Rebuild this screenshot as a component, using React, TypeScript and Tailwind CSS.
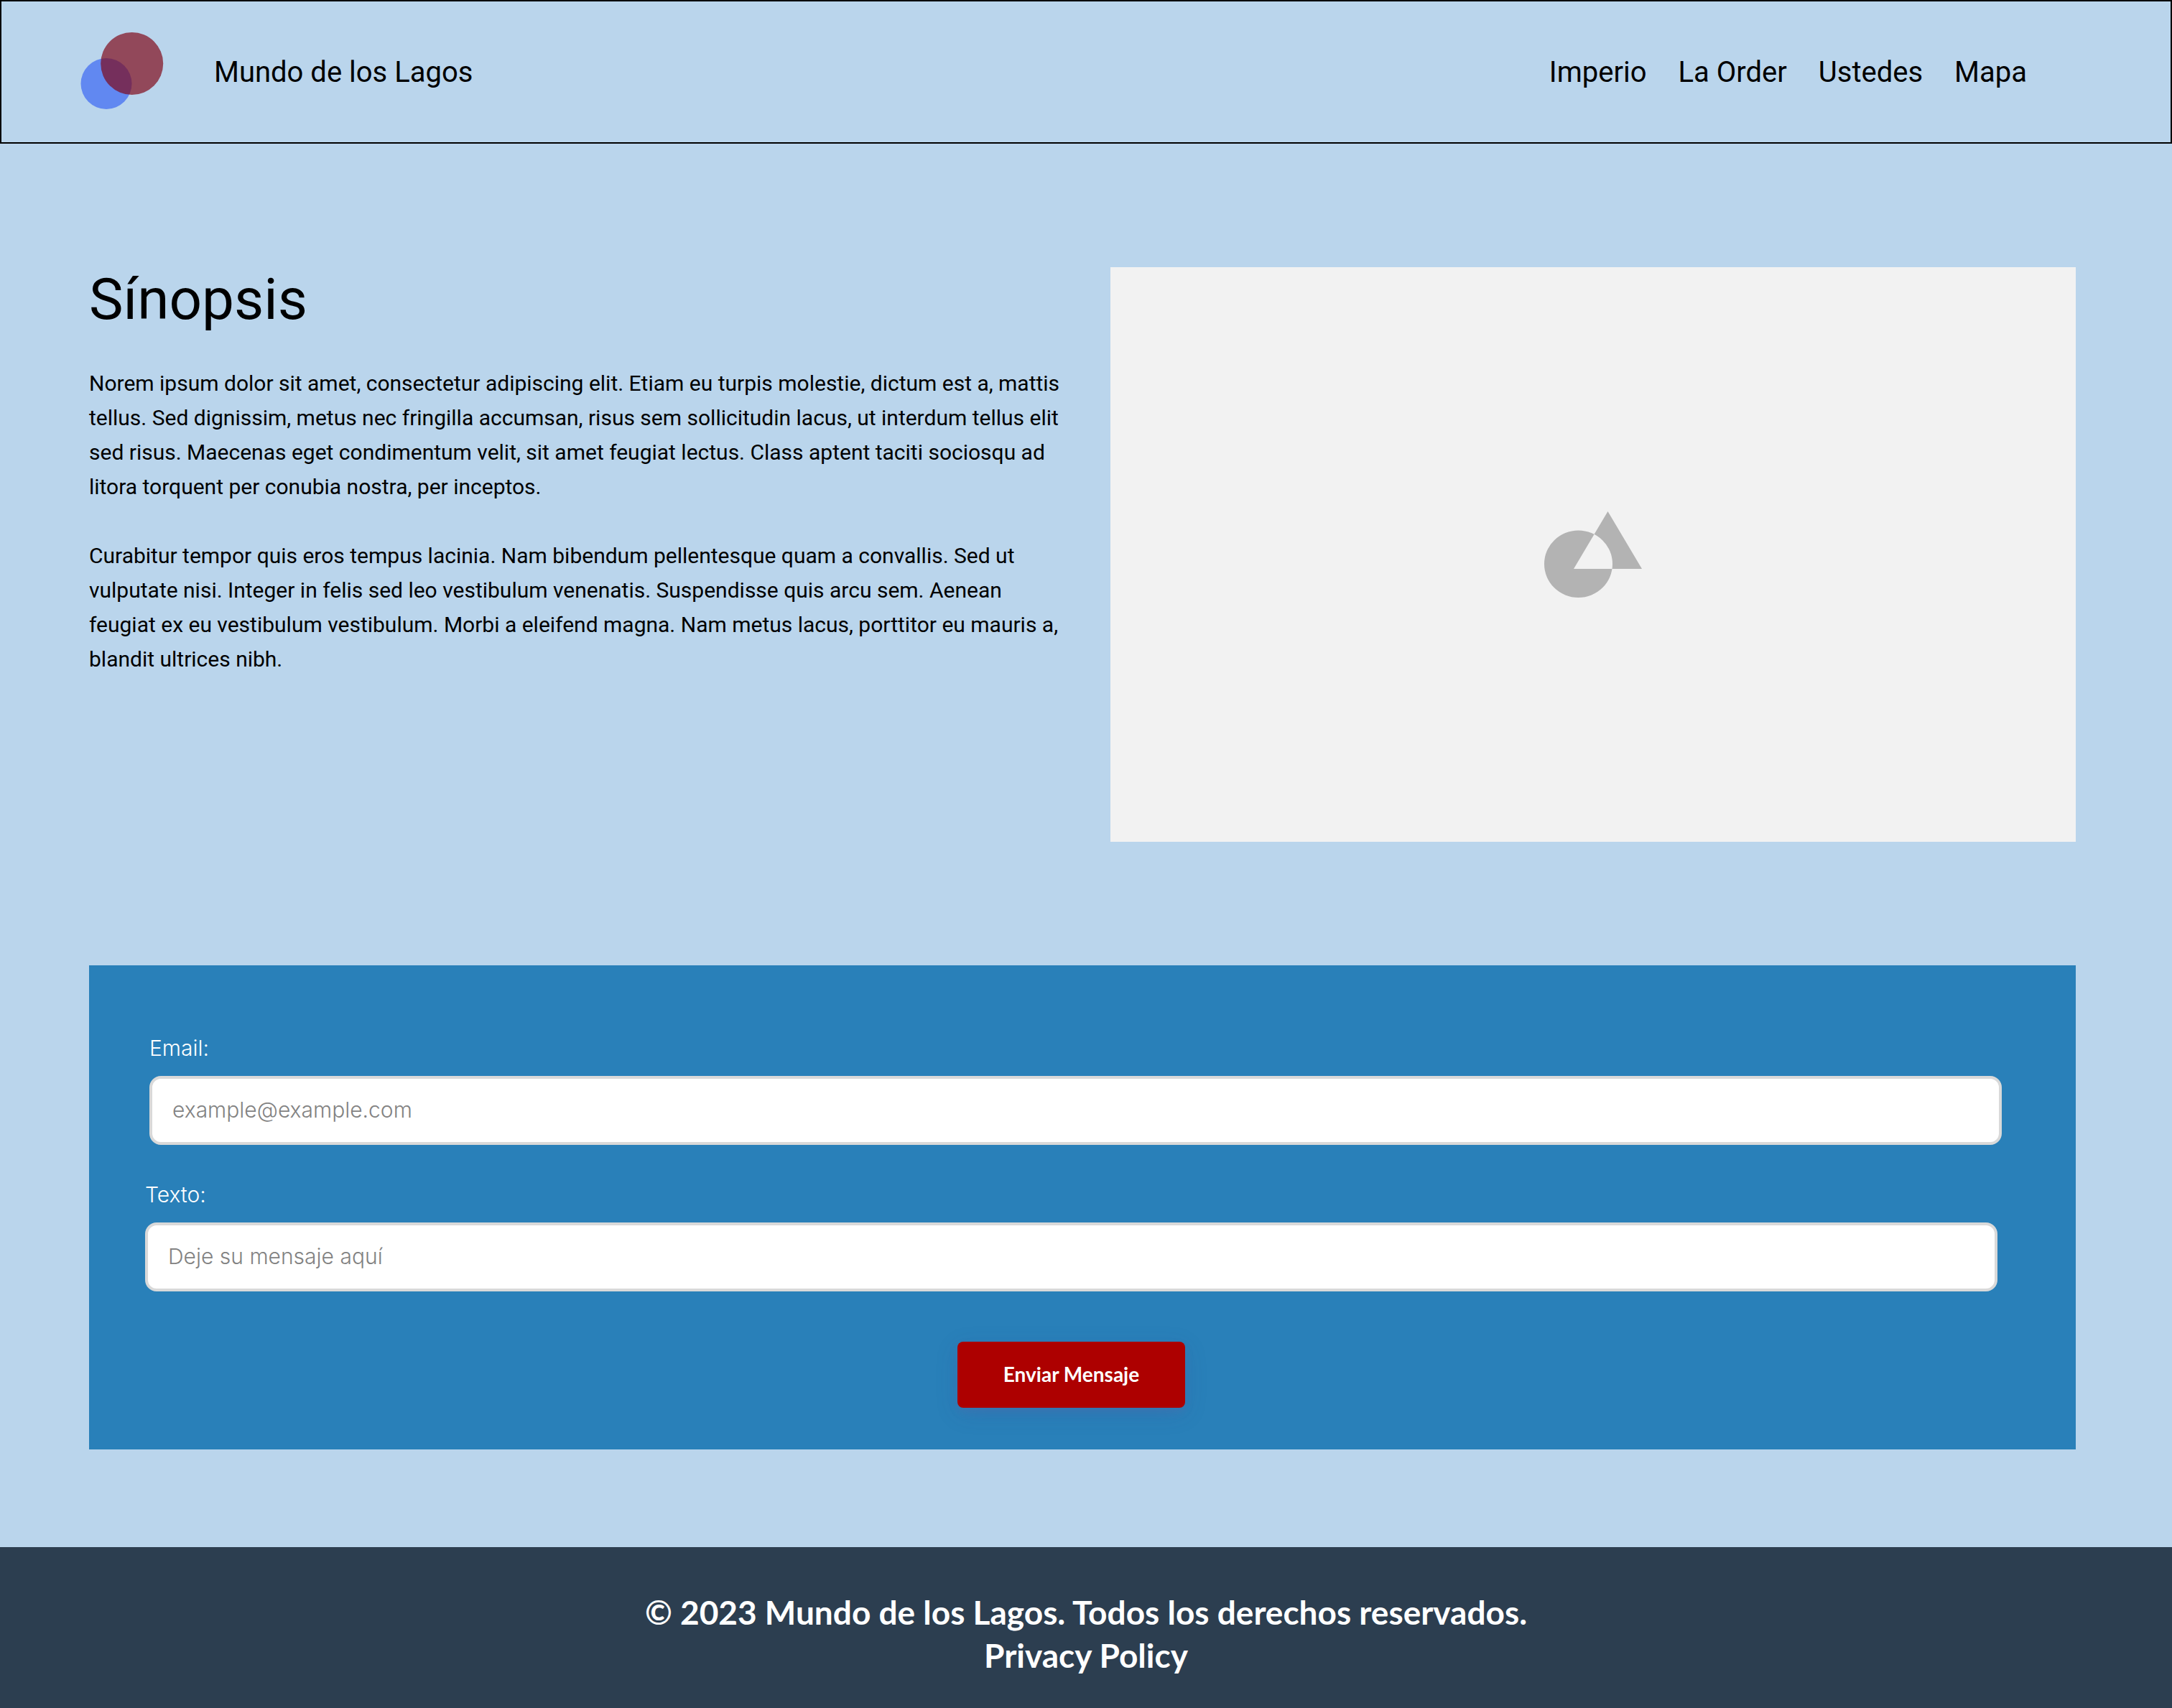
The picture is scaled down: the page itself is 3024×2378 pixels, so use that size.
const links = ['Imperio', 'La Order', 'Ustedes', 'Mapa'];

function Logo() {
  return (
    <svg className="h-[112px] w-[116px]" viewBox="0 0 116 112" role="img" aria-label="Mundo de los Lagos">
      <circle cx="36" cy="71.5" r="35.5" fill="#083BF6" fillOpacity="0.5" />
      <circle cx="71.7" cy="43.5" r="43.5" fill="#7F0414" fillOpacity="0.68" />
    </svg>
  );
}

function Field({ id, label, type, placeholder }: { id: string; label: string; type: string; placeholder: string }) {
  return (
    <div className="flex flex-col gap-4 font-['Inter',sans-serif] text-[30px] font-[350]">
      <label htmlFor={id} className="leading-[46px] text-white">
        {label}
      </label>
      <input
        id={id}
        type={type}
        placeholder={placeholder}
        className="h-24 w-full rounded-[16px] border-4 border-[#d9d9d9] bg-white px-7 pb-0.5 text-[#333333] placeholder:text-[#828282]"
      />
    </div>
  );
}

export default function App() {
  return (
    <div className="flex min-h-screen flex-col bg-[#bad5ec] font-['Roboto',sans-serif] text-black">
      <header className="flex h-[200px] items-center border-2 border-black pt-0.5 pr-[200px] pl-[110px]">
        <Logo />
        <span className="ml-[70px] text-[40px] leading-[48px]">Mundo de los Lagos</span>
        <nav className="ml-auto flex gap-11 text-[40px] leading-[48px]">
          {links.map((link) => (
            <a key={link} href="#">
              {link}
            </a>
          ))}
        </nav>
      </header>

      <main className="flex flex-1 flex-col gap-[172px] pt-[172px] pr-[134px] pb-[136px] pl-[124px]">
        <section className="grid grid-cols-[1362fr_1344fr] gap-[60px]">
          <div>
            <h1 className="text-[80px] leading-[90px]">Sínopsis</h1>
            <div className="mt-12 flex flex-col gap-12 text-[30px] leading-[48px]">
              <p>
                Norem ipsum dolor sit amet, consectetur adipiscing elit. Etiam eu turpis molestie, dictum est a, mattis
                tellus. Sed dignissim, metus nec fringilla accumsan, risus sem sollicitudin lacus, ut interdum tellus
                elit sed risus. Maecenas eget condimentum velit, sit amet feugiat lectus. Class aptent taciti sociosqu
                ad litora torquent per conubia nostra, per inceptos.
              </p>
              <p>
                Curabitur tempor quis eros tempus lacinia. Nam bibendum pellentesque quam a convallis. Sed ut vulputate
                nisi. Integer in felis sed leo vestibulum venenatis. Suspendisse quis arcu sem. Aenean feugiat ex eu
                vestibulum vestibulum. Morbi a eleifend magna. Nam metus lacus, porttitor eu mauris a, blandit ultrices
                nibh.
              </p>
            </div>
          </div>
          <div className="flex aspect-[1344/800] items-center justify-center bg-[#f2f2f2]">
            <svg className="h-[120px] w-[136px]" viewBox="0 0 136 120" fill="#b3b3b3" fillRule="evenodd" aria-hidden="true">
              <path d="M47.5 26.5a47.5 46.75 0 1 0 0 93.5a47.5 46.75 0 1 0 0-93.5ZM88.5 0L136 80H41Z" />
            </svg>
          </div>
        </section>

        <form className="flex flex-col bg-[#2980b9] pt-[92px] pr-[109px] pb-[58px] pl-[78px]">
          <div className="-mr-1.5 pl-1.5">
            <Field id="email" label="Email:" type="email" placeholder="example@example.com" />
          </div>
          <div className="mt-[46px]">
            <Field id="texto" label="Texto:" type="text" placeholder="Deje su mensaje aquí" />
          </div>
          <button
            type="submit"
            className="mt-[70px] self-center rounded-[8px] bg-[#ad0000] px-16 pt-[23px] pb-[25px] font-['Lato',sans-serif] text-[28px] leading-[44px] font-bold text-white shadow-[0_8px_32px_rgba(59,63,150,0.16),0_6px_12px_rgba(120,110,170,0.2)]"
          >
            Enviar Mensaje
          </button>
        </form>
      </main>

      <footer className="bg-[#2c3e50] pt-[61px] pb-[43px] text-center font-['Lato',sans-serif] text-[46px] leading-[60px] font-bold text-white">
        <p>© 2023 Mundo de los Lagos. Todos los derechos reservados.</p>
        <a href="#">Privacy Policy</a>
      </footer>
    </div>
  );
}
